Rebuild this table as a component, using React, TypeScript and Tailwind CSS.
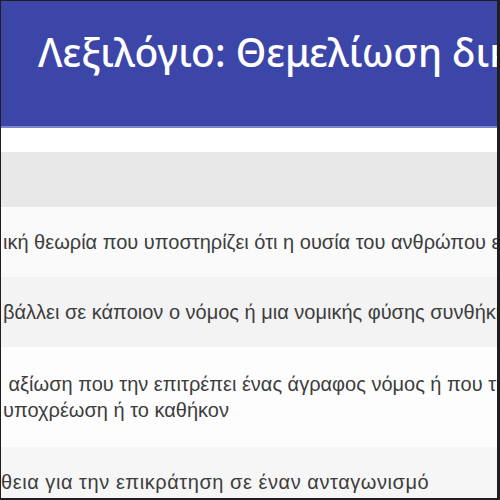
const rows = [
	{ id: 1, lines: ["ική θεωρία που υποστηρίζει ότι η ουσία του ανθρώπου είναι"], bg: "bg-[#fafafa]", h: "h-[70px]", indent: "pl-[2px]" },
	{ id: 2, lines: ["βάλλει σε κάποιον ο νόμος ή μια νομικής φύσης συνθήκη"], bg: "bg-[#f3f3f4]", h: "h-[70px]", indent: "pl-[2px]" },
	{
		id: 3,
		lines: [
			"\u00a0αξίωση που την επιτρέπει ένας άγραφος νόμος ή που την",
			"υποχρέωση ή το καθήκον",
		],
		bg: "bg-[#fdfdfd]",
		h: "h-[100px]",
		indent: "pl-[2px]",
	},
	{ id: 4, lines: ["θεια για την επικράτηση σε έναν ανταγωνισμό"], bg: "bg-[#f6f6f6]", h: "h-[70px]", indent: "pl-0 tracking-[0.55px]" },
];

export default function App() {
	return (
		<div className="w-[500px] h-[500px] overflow-hidden bg-white border-l border-t border-r-[3px] border-b-2 border-[#1e1e1e] font-['Liberation_Sans',Arial,sans-serif]">
			{/* page header */}
			<header className="h-[127px] bg-[#3c45a8] border-b-2 border-[#7e84cb] pt-[26px] pl-[37px]">
				<h1 className="font-['Noto_Sans',sans-serif] text-[39px] leading-[50px] font-medium text-white whitespace-nowrap">
					Λεξιλόγιο: Θεμελίωση δικαίου
				</h1>
			</header>

			<div className="h-[24px] bg-white" />

			{/* table */}
			<div className="flex flex-col">
				<div className="h-[55px] bg-[#e8e8e8]" />
				{rows.map((row) => (
					<div
						key={row.id}
						className={`${row.h} ${row.bg} ${row.indent} flex flex-col justify-center text-[20px] leading-[26px] text-[#3d3d3d] whitespace-nowrap`}
					>
						{row.lines.map((line) => (
							<span key={line}>{line}</span>
						))}
					</div>
				))}
			</div>
		</div>
	);
}
